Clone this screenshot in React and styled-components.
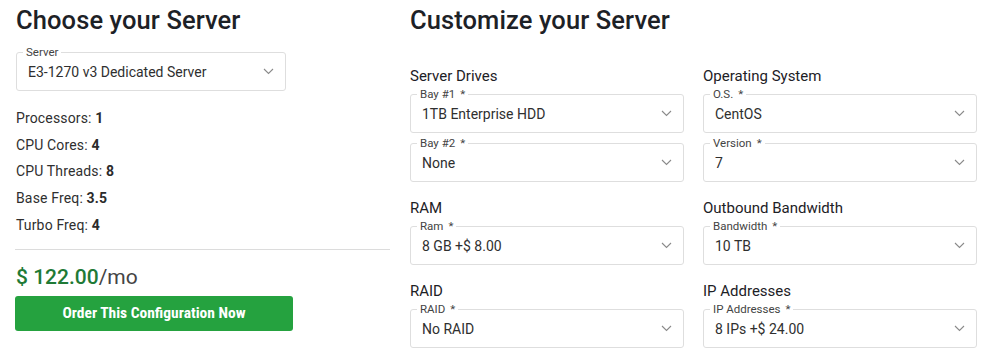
import React from "react";
import styled, { createGlobalStyle } from "styled-components";

const Global = createGlobalStyle`
  html, body { margin: 0; padding: 0; background: #fff; }
  body { font-family: Roboto, "Noto Sans", "Liberation Sans", sans-serif; color: #212529; }
  * { box-sizing: border-box; }
`;

const Page = styled.div`
  display: grid;
  grid-template-columns: 376px 1fr;
  column-gap: 19px;
  padding: 0 9px 0 15px;
  width: 986px;
`;

const Column = styled.div`
  display: flex;
  flex-direction: column;
`;

const Heading = styled.h2`
  margin: 0;
  padding-top: 5px;
  font-size: 25.5px;
  line-height: 31px;
  font-weight: 500;
  letter-spacing: 0.1px;
  color: #1d2126;
  padding-left: ${(p) => p.$indent || 0}px;
`;

const Spacer = styled.div`
  height: ${(p) => p.$h}px;
`;

const FieldWrap = styled.div`
  position: relative;
  height: 39px;
  width: ${(p) => (p.$width ? `${p.$width}px` : "100%")};
  margin-left: ${(p) => p.$ml || 0}px;
  border: 1px solid #dedede;
  border-radius: 3px;
  display: flex;
  align-items: center;
  padding: 0 11px;
  background: #fff;
`;

const FloatLabel = styled.span`
  position: absolute;
  top: -7px;
  left: 6px;
  padding: 0 3px;
  background: #fff;
  font-size: 11.5px;
  line-height: 13px;
  color: #444;
`;

const Required = styled.span`
  margin-left: 5px;
`;

const Value = styled.span`
  flex: 1;
  font-size: 14px;
  color: #2f2f2f;
  white-space: nowrap;
`;

const Chevron = () => (
  <svg width="11" height="7" viewBox="0 0 11 7" aria-hidden="true">
    <path d="M1 1 L5.5 5.5 L10 1" fill="none" stroke="#8a8a8a" strokeWidth="1.1" />
  </svg>
);

const Select = ({ label, required, value, width, ml }) => (
  <FieldWrap $width={width} $ml={ml}>
    <FloatLabel>
      {label}
      {required && <Required>*</Required>}
    </FloatLabel>
    <Value>{value}</Value>
    <Chevron />
  </FieldWrap>
);

const Specs = styled.div`
  margin-top: 14px;
  padding-left: 1px;
  display: flex;
  flex-direction: column;
`;

const Spec = styled.div`
  font-size: 14px;
  line-height: 26.7px;
  color: #2f2f2f;
  letter-spacing: 0.15px;
  b { font-weight: 700; color: #2b2b2b; }
`;

const Rule = styled.hr`
  margin: 10px 0 0 0;
  border: 0;
  border-top: 1px solid #dcdcdc;
  width: 375px;
`;

const Price = styled.div`
  margin-top: 14px;
  padding-left: 1px;
  font-size: 21px;
  line-height: 26px;
  color: #1f7a36;
  font-weight: 500;
  span { color: #444; font-weight: 400; }
`;

const OrderButton = styled.button`
  margin-top: 6px;
  width: 278px;
  height: 35px;
  border: 0;
  border-radius: 3px;
  background: #25a23f;
  color: #fff;
  font-family: "Liberation Sans Narrow", "Roboto Condensed", "Liberation Sans", sans-serif;
  font-weight: 700;
  font-size: 15.5px;
  cursor: pointer;
`;

const Options = styled.div`
  margin-top: 29px;
  display: grid;
  grid-template-columns: 274px 274px;
  column-gap: 19px;
  row-gap: 15px;
`;

const Group = styled.div`
  display: flex;
  flex-direction: column;
  gap: 10px;
`;

const GroupTitle = styled.div`
  font-size: 15px;
  line-height: 20px;
  font-weight: 400;
  color: #1d2126;
  padding-top: 1px;
  margin-bottom: -2px;
`;

const specs = [
  ["Processors", "1"],
  ["CPU Cores", "4"],
  ["CPU Threads", "8"],
  ["Base Freq", "3.5"],
  ["Turbo Freq", "4"],
];

const groups = [
  { title: "Server Drives", fields: [["Bay #1", "1TB Enterprise HDD"], ["Bay #2", "None"]] },
  { title: "Operating System", fields: [["O.S.", "CentOS"], ["Version", "7"]] },
  { title: "RAM", fields: [["Ram", "8 GB +$ 8.00"]] },
  { title: "Outbound Bandwidth", fields: [["Bandwidth", "10 TB"]] },
  { title: "RAID", fields: [["RAID", "No RAID"]] },
  { title: "IP Addresses", fields: [["IP Addresses", "8 IPs +$ 24.00"]] },
];

export default function App() {
  return (
    <>
      <Global />
      <Page>
        <Column>
          <Heading $indent={1}>Choose your Server</Heading>
          <Spacer $h={16} />
          <Select label="Server" value="E3-1270 v3 Dedicated Server" width={270} ml={1} />
          <Specs>
            {specs.map(([k, v]) => (
              <Spec key={k}>
                {k}: <b>{v}</b>
              </Spec>
            ))}
          </Specs>
          <Rule />
          <Price>
            $ 122.00<span>/mo</span>
          </Price>
          <OrderButton>Order This Configuration Now</OrderButton>
        </Column>
        <Column>
          <Heading>Customize your Server</Heading>
          <Options>
            {groups.map((g) => (
              <Group key={g.title}>
                <GroupTitle>{g.title}</GroupTitle>
                {g.fields.map(([l, v]) => (
                  <Select key={l} label={l} required value={v} />
                ))}
              </Group>
            ))}
          </Options>
        </Column>
      </Page>
    </>
  );
}
